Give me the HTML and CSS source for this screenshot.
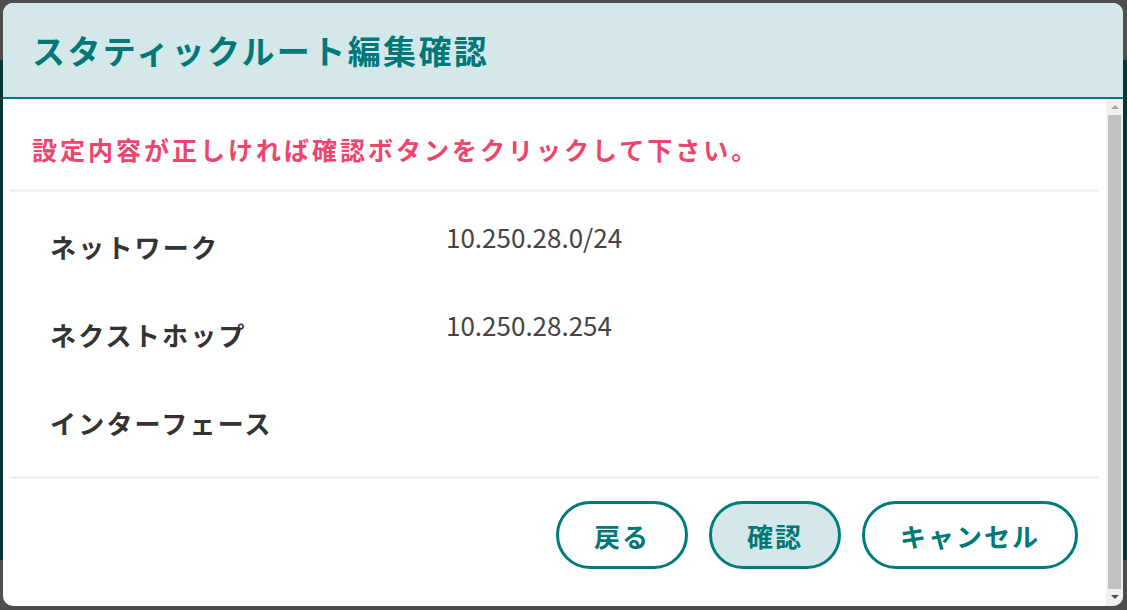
FILE: index.html
```html
<!DOCTYPE html>
<html lang="ja">
<head>
    <meta charset="UTF-8">
    <meta name="viewport" content="width=device-width, initial-scale=1.0">
    <title>スタティックルート編集確認</title>
    <link rel="stylesheet" href="styles.css">
</head>
<body>
    <div class="modal">
        <div class="modal-header">
            <h2>スタティックルート編集確認</h2>
        </div>

        <div class="modal-body">
            <div class="modal-content">
                <p class="message">設定内容が正しければ確認ボタンをクリックして下さい。</p>

                <div class="rows">
                    <div class="row">
                        <div class="row-label">ネットワーク</div>
                        <div class="row-value">10.250.28.0/24</div>
                    </div>
                    <div class="row">
                        <div class="row-label">ネクストホップ</div>
                        <div class="row-value">10.250.28.254</div>
                    </div>
                    <div class="row">
                        <div class="row-label">インターフェース</div>
                        <div class="row-value"></div>
                    </div>
                </div>

                <div class="actions">
                    <button class="btn">戻る</button>
                    <button class="btn btn-primary">確認</button>
                    <button class="btn">キャンセル</button>
                </div>
            </div>

            <div class="scrollbar">
                <div class="arrow arrow-up"></div>
                <div class="thumb"></div>
                <div class="arrow arrow-down"></div>
            </div>
        </div>
    </div>
</body>
</html>
```

FILE: styles.css
```css
html, body {
    height: 100%;
}
body {
    margin: 0;
    font-family: "Noto Sans CJK JP", "Noto Sans", sans-serif;
    background-color: #4e4e4e;
    background-image:
        linear-gradient(#4e4e4e 0 60px, #073636 60px 560px, #4e4e4e 560px),
        linear-gradient(#4e4e4e 0 60px, #073636 60px 560px, #4e4e4e 560px);
    background-size: 3px 100%, 4px 100%;
    background-position: left top, right top;
    background-repeat: no-repeat;
    padding: 3px 4px 4px 3px;
    box-sizing: border-box;
    overflow: hidden;
}
.modal {
    height: 603px;
    background: white;
    border-radius: 10px;
    overflow: hidden;
    display: flex;
    flex-direction: column;
}
.modal-header {
    background: #d4e8ea;
    border-bottom: 2px solid #007b7b;
    height: 94px;
    display: flex;
    align-items: center;
    padding-left: 29px;
    flex-shrink: 0;
}
.modal-header h2 {
    margin: 0;
    font-size: 33px;
    letter-spacing: 2.4px;
    color: #007878;
    font-weight: bold;
    line-height: 1.4;
}
.modal-body {
    flex: 1;
    display: flex;
    min-height: 0;
}
.modal-content {
    flex: 1;
    display: flex;
    flex-direction: column;
}
.message {
    margin: 0 7px;
    padding: 31px 0 20px 22px;
    font-size: 25px;
    line-height: 39px;
    letter-spacing: 3px;
    font-weight: bold;
    color: #ef456c;
    border-bottom: 3px solid #f2f2f2;
}
.rows {
    display: flex;
    flex-direction: column;
    gap: 42px;
    padding: 28px 0 34px 0;
    margin: 0 7px;
    border-bottom: 3px solid #f2f2f2;
}
.row {
    display: flex;
    align-items: flex-start;
    height: 46px;
}
.row-label {
    width: 396px;
    padding-left: 40px;
    margin-top: 7px;
    font-size: 26px;
    line-height: 39px;
    letter-spacing: 2.2px;
    font-weight: bold;
    color: #333;
}
.row-value {
    font-size: 26px;
    line-height: 34px;
    color: #444;
}
.actions {
    display: flex;
    justify-content: flex-end;
    gap: 21px;
    padding: 22px 28px 0 0;
}
.btn {
    height: 68px;
    padding: 0 35px;
    background: white;
    border: 3px solid #007b7b;
    border-radius: 34px;
    font-family: inherit;
    font-size: 26px;
    letter-spacing: 2px;
    font-weight: bold;
    color: #007878;
    cursor: pointer;
}
.btn-primary {
    background: #d4e8ea;
}
.scrollbar {
    width: 17px;
    background: #f1f1f1;
    display: flex;
    flex-direction: column;
    align-items: center;
    flex-shrink: 0;
}
.arrow {
    width: 0;
    height: 0;
    border-left: 4px solid transparent;
    border-right: 4px solid transparent;
}
.arrow-up {
    border-bottom: 4px solid #a3a3a3;
    margin: 6px 0 6px;
}
.arrow-down {
    border-top: 4px solid #505050;
    margin: 6px 0 7px;
}
.thumb {
    flex: 1;
    width: 13px;
    background: #c1c1c1;
}
```
